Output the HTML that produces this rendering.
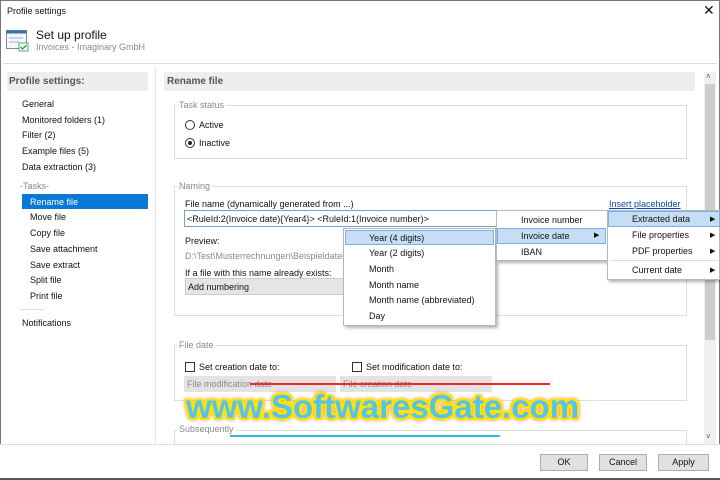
<!DOCTYPE html><html><head><style>
*{margin:0;padding:0;box-sizing:border-box}
body{width:720px;height:480px;background:#fff;font-family:"Liberation Sans",sans-serif;font-size:9px;color:#111;position:relative;overflow:hidden}
.a{position:absolute;white-space:nowrap}
.g{color:#8a8a8a}
.box{position:absolute;border:1px solid #ddd}
.lg{position:absolute;background:#fff;padding:0 2px;color:#8a8a8a}
.menu{position:absolute;background:#fff;border:1px solid #b8b8b8;box-shadow:2px 2px 3px rgba(0,0,0,.3)}
.hl{position:absolute;background:#c5def5;border:1px solid #7fb0e0}
.btn{position:absolute;background:#e1e1e1;border:1px solid #adadad;text-align:center;line-height:15px;font-size:9px}
</style></head><body>
<div style="position:absolute;left:0;top:0;width:720px;height:480px;border:1px solid #777;border-bottom:2px solid #555"></div>
<div class="a" style="left:7px;top:6px">Profile settings</div>
<div class="a" style="left:703px;top:2px;font-size:14px">✕</div>
<svg class="a" style="left:6px;top:30px" width="24" height="22"><rect x="0.5" y="0.5" width="20" height="18" fill="#f4f8fc" stroke="#6b8fb5"/><rect x="0.5" y="0.5" width="20" height="3" fill="#3c6ea8"/><line x1="3" y1="8" x2="17" y2="8" stroke="#aac"/><line x1="3" y1="12" x2="13" y2="12" stroke="#aac"/><rect x="13" y="13" width="9" height="8" fill="#fff" stroke="#4a7"/><path d="M14.5 17l2 2 4-4" stroke="#2a9a3a" fill="none" stroke-width="1.3"/></svg>
<div class="a" style="left:36px;top:28px;font-size:12px">Set up profile</div>
<div class="a g" style="left:36px;top:42px;font-size:9px">Invoices - Imaginary GmbH</div>
<div class="a" style="left:3px;top:63px;width:714px;height:1px;background:#ddd"></div>
<div class="a" style="left:7px;top:72px;width:141px;height:19px;background:#eeeeee;font-weight:bold;color:#555;font-size:10px;padding:4px 2px">Profile settings:</div>
<div class="a" style="left:155px;top:68px;width:1px;height:376px;background:#e4e4e4"></div>
<div class="a" style="left:22px;top:99px">General</div>
<div class="a" style="left:22px;top:115px">Monitored folders (1)</div>
<div class="a" style="left:22px;top:130px">Filter (2)</div>
<div class="a" style="left:22px;top:146px">Example files (5)</div>
<div class="a" style="left:22px;top:162px">Data extraction (3)</div>
<div class="a g" style="left:20px;top:181px">-Tasks-</div>
<div class="a" style="left:22px;top:194px;width:126px;height:15px;background:#0a78d7"></div>
<div class="a" style="left:30px;top:197px;color:#fff">Rename file</div>
<div class="a" style="left:30px;top:212px">Move file</div>
<div class="a" style="left:30px;top:228px">Copy file</div>
<div class="a" style="left:30px;top:244px">Save attachment</div>
<div class="a" style="left:30px;top:260px">Save extract</div>
<div class="a" style="left:30px;top:275px">Split file</div>
<div class="a" style="left:30px;top:291px">Print file</div>
<div class="a" style="left:20px;top:309px;width:24px;height:1px;background:#ddd"></div>
<div class="a" style="left:22px;top:318px">Notifications</div>
<div class="a" style="left:164px;top:72px;width:531px;height:19px;background:#eeeeee;font-weight:bold;color:#555;font-size:10px;padding:4px 3px">Rename file</div>
<div class="a" style="left:704px;top:72px;width:12px;height:372px;background:#f0f0f0"></div>
<div class="a" style="left:705px;top:84px;width:10px;height:256px;background:#cdcdcd"></div>
<div class="a" style="left:706px;top:72px;font-size:8px;color:#555">˄</div>
<div class="a" style="left:706px;top:432px;font-size:8px;color:#555">˅</div>
<div class="box" style="left:174px;top:105px;width:513px;height:54px"></div>
<div class="lg" style="left:177px;top:100px">Task status</div>
<div class="a" style="left:185px;top:120px;width:10px;height:10px;border:1px solid #333;border-radius:50%"></div>
<div class="a" style="left:199px;top:120px">Active</div>
<div class="a" style="left:185px;top:138px;width:10px;height:10px;border:1px solid #333;border-radius:50%"><div style="margin:2px;width:4px;height:4px;background:#222;border-radius:50%"></div></div>
<div class="a" style="left:199px;top:138px">Inactive</div>
<div class="box" style="left:174px;top:186px;width:513px;height:130px"></div>
<div class="lg" style="left:177px;top:181px">Naming</div>
<div class="a" style="left:185px;top:199px">File name (dynamically generated from ...)</div>
<div class="a" style="left:609px;top:199px;color:#0645ad;text-decoration:underline">Insert placeholder</div>
<div class="a" style="left:184px;top:210px;width:314px;height:17px;border:1px solid #7a9cc8;padding:3px 2px">&lt;RuleId:2(Invoice date){Year4}&gt; &lt;RuleId:1(Invoice number)&gt;</div>
<div class="a" style="left:185px;top:236px">Preview:</div>
<div class="a g" style="left:185px;top:251px">D:\Test\Musterrechnungen\Beispieldateien</div>
<div class="a" style="left:185px;top:268px">If a file with this name already exists:</div>
<div class="a" style="left:185px;top:278px;width:160px;height:17px;background:#e5e5e5;border:1px solid #ccc;padding:3px 2px">Add numbering</div>
<div class="box" style="left:174px;top:345px;width:513px;height:56px"></div>
<div class="lg" style="left:177px;top:340px">File date</div>
<div class="a" style="left:185px;top:362px;width:10px;height:10px;border:1px solid #333"></div>
<div class="a" style="left:199px;top:362px">Set creation date to:</div>
<div class="a" style="left:352px;top:362px;width:10px;height:10px;border:1px solid #333"></div>
<div class="a" style="left:366px;top:362px">Set modification date to:</div>
<div class="a g" style="left:184px;top:376px;width:152px;height:16px;background:#e3e3e3;padding:3px 3px">File modification date</div>
<div class="a g" style="left:340px;top:376px;width:152px;height:16px;background:#e3e3e3;padding:3px 3px">File creation date</div>
<div class="a" style="left:250px;top:383px;width:300px;height:2px;background:#f22"></div>
<div class="box" style="left:174px;top:430px;width:513px;height:30px;border-bottom:none"></div>
<div class="lg" style="left:177px;top:424px">Subsequently</div>
<div class="a" style="left:0;top:444px;width:720px;height:34px;background:#fff;border-top:1px solid #ddd"></div>
<div class="a" style="left:230px;top:435px;width:270px;height:2px;background:#2ab8ee"></div>
<div class="btn" style="left:540px;top:454px;width:48px;height:17px">OK</div>
<div class="btn" style="left:599px;top:454px;width:48px;height:17px">Cancel</div>
<div class="btn" style="left:658px;top:454px;width:51px;height:17px">Apply</div>
<div class="a" style="left:186px;top:388px;font-size:33px;font-weight:bold;color:#56c2ee;letter-spacing:0px;text-shadow:-2px -2px 0 #ffe400,2px -2px 0 #ffe400,-2px 2px 0 #ffe400,2px 2px 0 #ffe400,0 0 4px #ff3a00,0 0 6px #ff3a00">www.SoftwaresGate.com</div>
<div class="menu" style="left:343px;top:228px;width:153px;height:98px"></div>
<div class="hl" style="left:345px;top:230px;width:149px;height:15px"></div>
<div class="a" style="left:369px;top:233px">Year (4 digits)</div>
<div class="a" style="left:369px;top:248px">Year (2 digits)</div>
<div class="a" style="left:369px;top:264px">Month</div>
<div class="a" style="left:369px;top:280px">Month name</div>
<div class="a" style="left:369px;top:295px">Month name (abbreviated)</div>
<div class="a" style="left:369px;top:311px">Day</div>
<div class="menu" style="left:496px;top:210px;width:112px;height:51px"></div>
<div class="hl" style="left:497px;top:228px;width:109px;height:16px"></div>
<div class="a" style="left:521px;top:215px">Invoice number</div>
<div class="a" style="left:521px;top:231px">Invoice date</div>
<div class="a" style="left:594px;top:231px;font-size:7px">▶</div>
<div class="a" style="left:521px;top:247px">IBAN</div>
<div class="menu" style="left:607px;top:210px;width:113px;height:70px"></div>
<div class="hl" style="left:608px;top:211px;width:112px;height:16px"></div>
<div class="a" style="left:632px;top:214px">Extracted data</div>
<div class="a" style="left:632px;top:230px">File properties</div>
<div class="a" style="left:632px;top:246px">PDF properties</div>
<div class="a" style="left:610px;top:260px;width:108px;height:1px;background:#ddd"></div>
<div class="a" style="left:632px;top:265px">Current date</div>
<div class="a" style="left:710px;top:215px;font-size:7px">▶</div>
<div class="a" style="left:710px;top:231px;font-size:7px">▶</div>
<div class="a" style="left:710px;top:247px;font-size:7px">▶</div>
<div class="a" style="left:710px;top:266px;font-size:7px">▶</div>
</body></html>
